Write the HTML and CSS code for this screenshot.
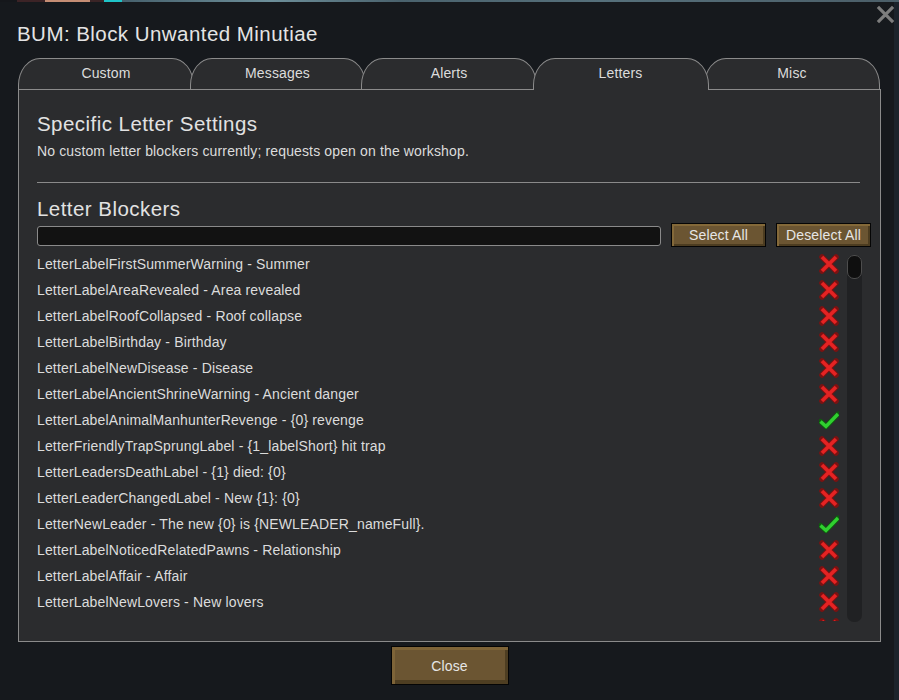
FILE: index.html
```html
<!DOCTYPE html>
<html>
<head>
<meta charset="utf-8">
<link rel="stylesheet" href="styles.css">
</head>
<body>
<svg class="defs" width="0" height="0">
  <symbol id="ico-x" viewBox="0 0 20 20">
    <path d="M3 3 L17 17 M17 3 L3 17" stroke="#7a1212" stroke-width="5.5" stroke-linecap="round" fill="none"/>
    <path d="M3 3 L17 17 M17 3 L3 17" stroke="#e42323" stroke-width="3.6" stroke-linecap="butt" fill="none"/>
  </symbol>
  <symbol id="ico-check" viewBox="0 0 20 20">
    <path d="M1.5 11.5 L7 16.5 L19 4" stroke="#0e5c0e" stroke-width="5.2" stroke-linecap="round" stroke-linejoin="round" fill="none"/>
    <path d="M1.5 11.5 L7 16.5 L19 4" stroke="#30cf30" stroke-width="3.4" stroke-linecap="butt" stroke-linejoin="miter" fill="none"/>
  </symbol>
</svg>
<div class="bgstrip"></div>
<div class="window">
  <svg class="close-x" viewBox="0 0 20 20"><path d="M2 2 L18 18 M18 2 L2 18" stroke="#7d7d7d" stroke-width="3.4" fill="none"/></svg>
  <h1 class="title">BUM: Block Unwanted Minutiae</h1>
  <div class="tabs">
    <div class="tab">Custom</div>
    <div class="tab">Messages</div>
    <div class="tab">Alerts</div>
    <div class="tab tab-active">Letters</div>
    <div class="tab">Misc</div>
  </div>
  <div class="panel">
    <h2 class="heading">Specific Letter Settings</h2>
    <p class="desc">No custom letter blockers currently; requests open on the workshop.</p>
    <div class="rule"></div>
    <h2 class="heading heading-blockers">Letter Blockers</h2>
    <div class="search-row">
      <div class="search"></div>
      <button class="btn btn-small">Select All</button>
      <button class="btn btn-small">Deselect All</button>
    </div>
    <div class="list-wrap">
      <div class="list">
        <div class="row"><span>LetterLabelFirstSummerWarning - Summer</span><svg class="ico"><use href="#ico-x"/></svg></div>
        <div class="row"><span>LetterLabelAreaRevealed - Area revealed</span><svg class="ico"><use href="#ico-x"/></svg></div>
        <div class="row"><span>LetterLabelRoofCollapsed - Roof collapse</span><svg class="ico"><use href="#ico-x"/></svg></div>
        <div class="row"><span>LetterLabelBirthday - Birthday</span><svg class="ico"><use href="#ico-x"/></svg></div>
        <div class="row"><span>LetterLabelNewDisease - Disease</span><svg class="ico"><use href="#ico-x"/></svg></div>
        <div class="row"><span>LetterLabelAncientShrineWarning - Ancient danger</span><svg class="ico"><use href="#ico-x"/></svg></div>
        <div class="row"><span>LetterLabelAnimalManhunterRevenge - {0} revenge</span><svg class="ico"><use href="#ico-check"/></svg></div>
        <div class="row"><span>LetterFriendlyTrapSprungLabel - {1_labelShort} hit trap</span><svg class="ico"><use href="#ico-x"/></svg></div>
        <div class="row"><span>LetterLeadersDeathLabel - {1} died: {0}</span><svg class="ico"><use href="#ico-x"/></svg></div>
        <div class="row"><span>LetterLeaderChangedLabel - New {1}: {0}</span><svg class="ico"><use href="#ico-x"/></svg></div>
        <div class="row"><span>LetterNewLeader - The new {0} is {NEWLEADER_nameFull}.</span><svg class="ico"><use href="#ico-check"/></svg></div>
        <div class="row"><span>LetterLabelNoticedRelatedPawns - Relationship</span><svg class="ico"><use href="#ico-x"/></svg></div>
        <div class="row"><span>LetterLabelAffair - Affair</span><svg class="ico"><use href="#ico-x"/></svg></div>
        <div class="row"><span>LetterLabelNewLovers - New lovers</span><svg class="ico"><use href="#ico-x"/></svg></div>
        <div class="row"><span></span><svg class="ico"><use href="#ico-x"/></svg></div>
      </div>
      <div class="scroll"><div class="thumb"></div></div>
    </div>
  </div>
  <div class="footer"><button class="btn btn-close">Close</button></div>
</div>
</body>
</html>
```
FILE: styles.css
```css
html, body {
  margin: 0;
  padding: 0;
}
body {
  background: #1c232b;
  font-family: "Liberation Sans", Arial, sans-serif;
  color: #dcdcdc;
  width: 899px;
  height: 700px;
  overflow: hidden;
}
.defs {
  position: absolute;
  width: 0;
  height: 0;
}
.bgstrip {
  height: 2px;
  background: linear-gradient(to right, #15171b 0, #15171b 17px, #3c2326 17px, #3c2326 45px, #c58d74 45px, #c58d74 90px, #3a2426 90px, #3a2426 104px, #1fc4c8 104px, #1fc4c8 122px, #46606c 122px, #6d8f9a 270px, #4a626d 400px, #56707b 600px, #4b5e68 899px);
}
.window {
  position: relative;
  width: 894px;
  height: 698px;
  box-sizing: border-box;
  background: #16191d;
  padding: 20px 0 0 18px;
}
.close-x {
  position: absolute;
  right: -1px;
  top: 3px;
  width: 19px;
  height: 19px;
}
.title {
  margin: 0 0 12px -1px;
  font-size: 20.5px;
  letter-spacing: 0.45px;
  line-height: 24px;
  font-weight: normal;
  color: #e4e4e4;
}
.tabs {
  display: flex;
  height: 31px;
  width: 862px;
}
.tab {
  flex: none;
  width: 176px;
  height: 31px;
  box-sizing: border-box;
  margin-left: -4.5px;
  border: 1px solid #8b8b8b;
  border-bottom: none;
  border-radius: 22px 22px 0 0 / 27px 27px 0 0;
  background: #2b2c2e;
  font-size: 14px;
  letter-spacing: 0.15px;
  line-height: 28px;
  text-align: center;
  color: #dcdcdc;
}
.tab:first-child {
  margin-left: 0;
}
.tab-active {
  position: relative;
  z-index: 2;
  height: 32px;
}
.panel {
  width: 863px;
  height: 553px;
  box-sizing: border-box;
  border: 1px solid #8b8b8b;
  background: #2b2c2e;
  padding: 22px 18px 0 18px;
}
.heading {
  margin: 0;
  font-size: 20.5px;
  letter-spacing: 0.45px;
  line-height: 24px;
  font-weight: normal;
  color: #e2e2e2;
}
.desc {
  margin: 6px 0 0 0;
  font-size: 14px;
  letter-spacing: 0.14px;
  line-height: 18px;
  color: #dcdcdc;
}
.rule {
  margin-top: 22px;
  height: 1px;
  background: #8a8a8a;
  width: 823px;
}
.heading-blockers {
  margin-top: 14px;
}
.search-row {
  display: flex;
  align-items: center;
  gap: 10px;
  margin: 2px -9px 0 0;
  height: 24px;
}
.search {
  flex: 1;
  height: 20px;
  margin-top: 2px;
  box-sizing: border-box;
  background: #121212;
  border: 1px solid #8a8a8a;
  border-radius: 3px;
}
.btn {
  font-family: "Liberation Sans", Arial, sans-serif;
  color: #e6e6e6;
  background: #6b5532;
  border: 1px solid #050505;
  padding: 0;
  box-sizing: border-box;
  cursor: default;
  letter-spacing: 0.15px;
}
.btn-small {
  width: 95px;
  height: 24px;
  font-size: 14px;
  box-shadow: inset 2px 2px 0 #846939, inset -2px -2px 0 #4c3c20;
}
.list-wrap {
  display: flex;
  gap: 4px;
  margin-top: 4px;
  height: 371px;
}
.list {
  flex: 1;
  height: 370px;
  overflow: hidden;
}
.row {
  display: flex;
  align-items: center;
  justify-content: space-between;
  height: 26px;
  padding-right: 4px;
  font-size: 14px;
  letter-spacing: 0.15px;
  color: #dcdcdc;
}
.ico {
  width: 20px;
  height: 20px;
}
.scroll {
  width: 15px;
  margin-top: 4px;
  height: 367px;
  background: #202123;
  border-radius: 7px;
}
.thumb {
  height: 24px;
  box-sizing: border-box;
  background: #0f0f0f;
  border: 1.5px solid #4d4d4d;
  border-radius: 7px;
}
.footer {
  width: 863px;
  display: flex;
  justify-content: center;
  margin-top: 4px;
}
.btn-close {
  width: 118px;
  height: 39px;
  font-size: 14px;
  box-shadow: inset 3px 3px 0 #7e6438, inset -3px -4px 0 #4e3e22;
}
```
